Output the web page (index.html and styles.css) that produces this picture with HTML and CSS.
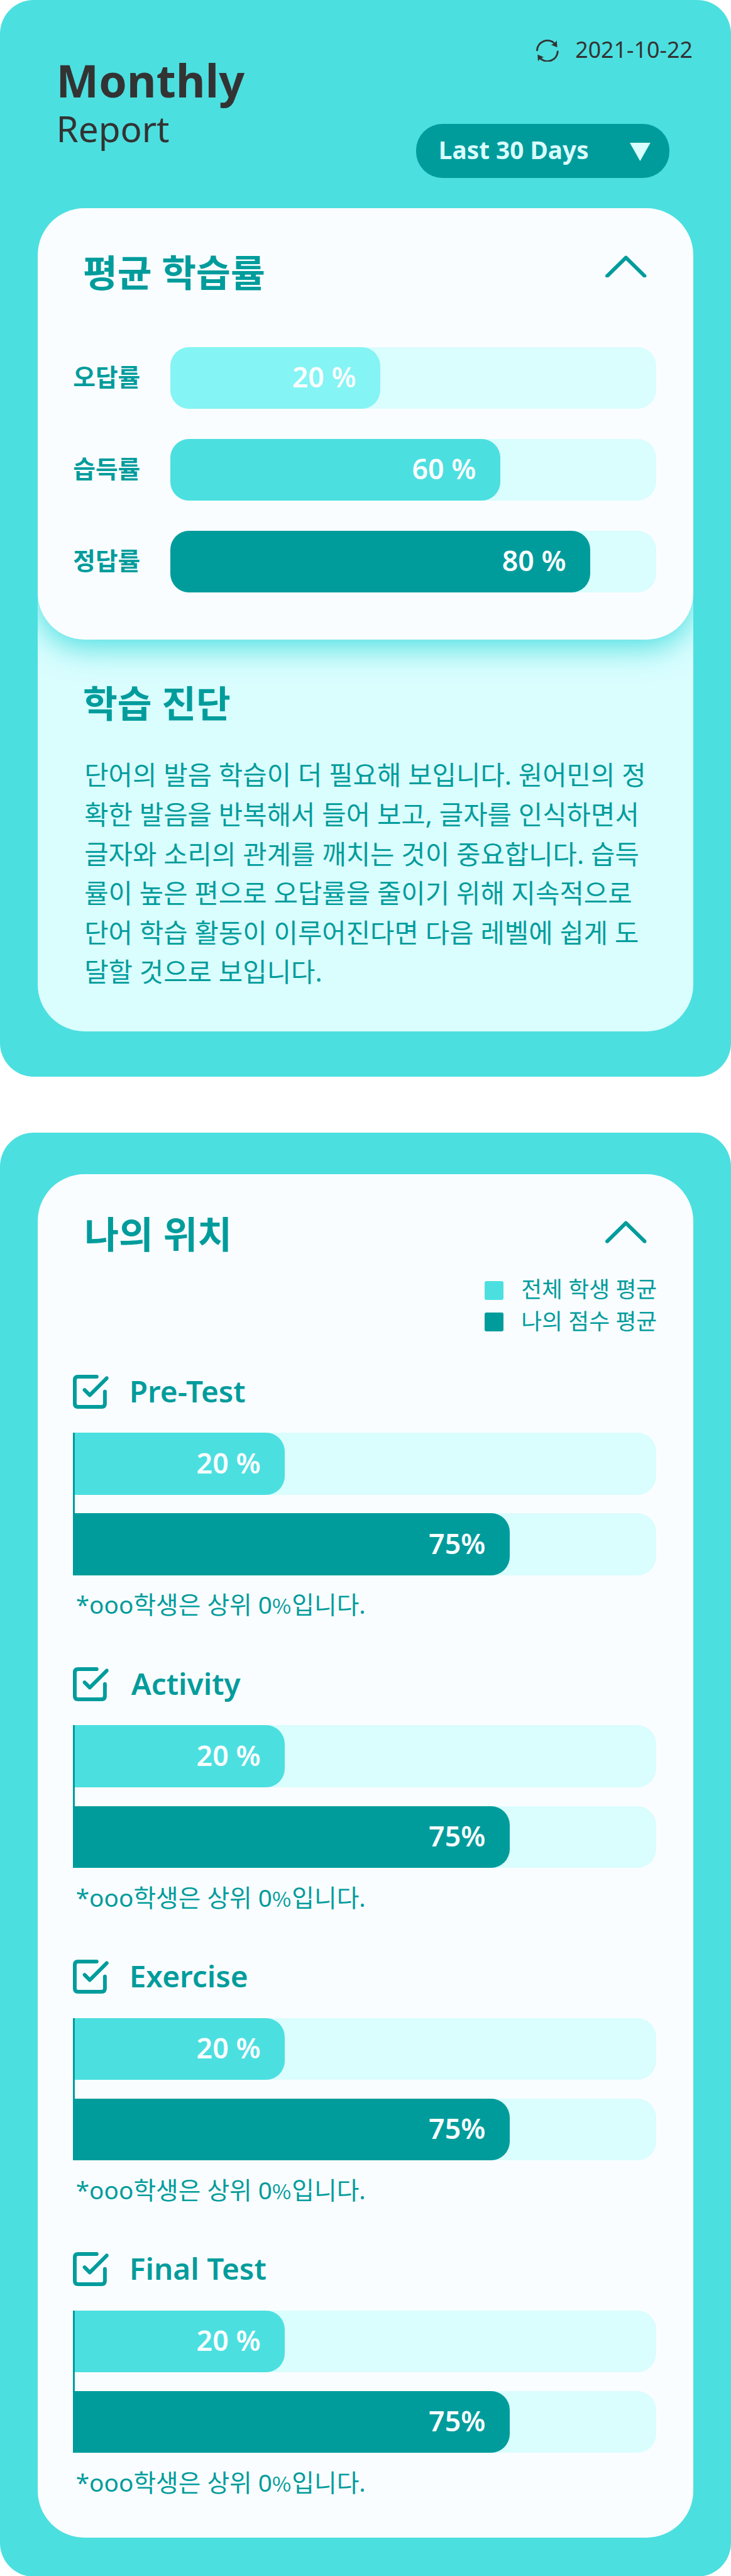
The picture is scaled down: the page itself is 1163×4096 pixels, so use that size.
FILE: index.html
```html
<!DOCTYPE html>
<html lang="ko">
<head>
<meta charset="utf-8">
<title>Monthly Report</title>
<link rel="stylesheet" href="styles.css">
</head>
<body>
<svg class="defs" width="0" height="0" aria-hidden="true">
  <symbol id="chevron" viewBox="0 0 88 48"><path d="M4 44L44 5L84 44" fill="none" stroke="currentColor" stroke-width="8" stroke-linecap="round" stroke-linejoin="round"/></symbol>
  <symbol id="check" viewBox="0 0 76 73"><path d="M50.7 4H11Q4 4 4 11V61.5Q4 68.5 11 68.5H61.3Q68.3 68.5 68.3 61.5V35.7M25 32.3L36 43.3L72.3 7.3" fill="none" stroke="currentColor" stroke-width="8" stroke-linecap="round" stroke-linejoin="round"/></symbol>
</svg>
<main class="page">
  <section class="sheet sheet-summary">
    <header class="top">
      <h1 class="heading"><span class="heading-main">Monthly</span><span class="heading-sub">Report</span></h1>
      <div class="tools">
        <div class="date">
          <svg class="refresh" viewBox="0 0 48 48"><path d="M2 22.5A22 22 0 0 1 39 8M46 25.5A22 22 0 0 1 9 40" fill="none" stroke="currentColor" stroke-width="4" stroke-linecap="round"/><path d="M44 2L45 16.5L31.7 11Q39 9 44 2ZM4 46L3 31.7L16.5 37.5Q9 39 4 46Z" fill="currentColor"/></svg>
          <time>2021-10-22</time>
        </div>
        <button class="range">Last 30 Days<svg class="caret" viewBox="0 0 44 39"><path d="M0 0H44L22 39Z" fill="currentColor"/></svg></button>
      </div>
    </header>
    <div class="under">
      <div class="panel panel-rate">
        <div class="panel-head"><h2>평균 학습률</h2><svg class="chevron"><use href="#chevron"/></svg></div>
        <div class="rates">
          <div class="rate"><span class="rate-label">오답률</span><div class="track"><div class="fill light" style="width:43.24%">20 %</div></div></div>
          <div class="rate"><span class="rate-label">습득률</span><div class="track"><div class="fill mid" style="width:67.95%">60 %</div></div></div>
          <div class="rate"><span class="rate-label">정답률</span><div class="track"><div class="fill dark" style="width:86.49%">80 %</div></div></div>
        </div>
      </div>
      <article class="diagnosis">
        <h2>학습 진단</h2>
        <p>단어의 발음 학습이 더 필요해 보입니다. 원어민의 정<br>확한 발음을 반복해서 들어 보고, 글자를 인식하면서<br>글자와 소리의 관계를 깨치는 것이 중요합니다. 습득<br>률이 높은 편으로 오답률을 줄이기 위해 지속적으로<br>단어 학습 활동이 이루어진다면 다음 레벨에 쉽게 도<br>달할 것으로 보입니다.</p>
      </article>
    </div>
  </section>
  <section class="sheet sheet-position">
    <div class="panel panel-position">
      <div class="panel-head"><h2>나의 위치</h2><svg class="chevron"><use href="#chevron"/></svg></div>
      <ul class="legend">
        <li><i class="swatch mid"></i><span>전체 학생 평균</span></li>
        <li><i class="swatch dark"></i><span>나의 점수 평균</span></li>
      </ul>
      <section class="test">
        <h3><svg class="check"><use href="#check"/></svg>Pre-Test</h3>
        <div class="chart"><div class="track"><div class="fill mid" style="width:36.13%">20 %</div></div><div class="track"><div class="fill dark" style="width:74.84%">75%</div></div></div>
        <p class="note">*ooo학생은 상위 0<span class="pct">%</span>입니다.</p>
      </section>
      <section class="test">
        <h3 class="wide"><svg class="check"><use href="#check"/></svg>Activity</h3>
        <div class="chart"><div class="track"><div class="fill mid" style="width:36.13%">20 %</div></div><div class="track"><div class="fill dark" style="width:74.84%">75%</div></div></div>
        <p class="note">*ooo학생은 상위 0<span class="pct">%</span>입니다.</p>
      </section>
      <section class="test">
        <h3><svg class="check"><use href="#check"/></svg>Exercise</h3>
        <div class="chart"><div class="track"><div class="fill mid" style="width:36.13%">20 %</div></div><div class="track"><div class="fill dark" style="width:74.84%">75%</div></div></div>
        <p class="note">*ooo학생은 상위 0<span class="pct">%</span>입니다.</p>
      </section>
      <section class="test">
        <h3><svg class="check"><use href="#check"/></svg>Final Test</h3>
        <div class="chart"><div class="track"><div class="fill mid" style="width:36.13%">20 %</div></div><div class="track"><div class="fill dark" style="width:74.84%">75%</div></div></div>
        <p class="note">*ooo학생은 상위 0<span class="pct">%</span>입니다.</p>
      </section>
    </div>
  </section>
</main>
</body>
</html>
```
FILE: styles.css
```css
:root {
  --u: 0.745513px;
  --teal: #4cdfe0;
  --deep: #009c9c;
  --pale: #dafdfe;
  --paper: #fafdff;
  --ink: #333;
}
* { box-sizing: border-box; margin: 0; padding: 0; }
body { background: #fff; font-family: "Noto Sans", "Noto Sans CJK KR", sans-serif; color: var(--deep); }
.defs { display: block; position: absolute; }
svg { display: block; flex: none; }
.page { display: flex; flex-direction: column; gap: calc(120 * var(--u)); width: calc(1560 * var(--u)); }
.sheet { background: var(--teal); border-radius: calc(72 * var(--u)); padding: 0 calc(80 * var(--u)); }
.sheet-summary { height: calc(2296 * var(--u)); }
.sheet-position { height: calc(3080 * var(--u)); padding-top: calc(88 * var(--u)); }

.top { height: calc(444 * var(--u)); display: flex; justify-content: space-between; color: var(--ink); }
.heading { display: flex; flex-direction: column; padding: calc(115 * var(--u)) 0 0 calc(40 * var(--u)); font-weight: 400; }
.heading-main { font-size: calc(96 * var(--u)); line-height: calc(112 * var(--u)); font-weight: 700; letter-spacing: calc(0.3 * var(--u)); }
.heading-sub { font-size: calc(76 * var(--u)); line-height: calc(95 * var(--u)); }
.tools { display: flex; flex-direction: column; align-items: flex-end; padding-top: calc(76 * var(--u)); gap: calc(124 * var(--u)); }
.date { display: flex; align-items: center; gap: calc(35 * var(--u)); height: calc(64 * var(--u)); padding-right: calc(2 * var(--u)); font-size: calc(48 * var(--u)); line-height: calc(64 * var(--u)); }
.date time { margin-top: calc(-5 * var(--u)); }
.refresh { width: calc(48 * var(--u)); height: calc(48 * var(--u)); }
.range { display: flex; align-items: center; justify-content: space-between; width: calc(540 * var(--u)); height: calc(116 * var(--u)); margin-right: calc(52 * var(--u)); padding: 0 calc(40 * var(--u)) calc(4 * var(--u)) calc(48 * var(--u)); border: 0; border-radius: calc(56 * var(--u)); background: var(--deep); color: var(--pale); font: 700 calc(52 * var(--u)) / 1.36 "Noto Sans", sans-serif; }
.caret { width: calc(44 * var(--u)); height: calc(39 * var(--u)); margin-top: calc(9 * var(--u)); }

.under { height: calc(1756 * var(--u)); border-radius: calc(100 * var(--u)); background: var(--pale); overflow: hidden; }
.panel { background: var(--paper); border-radius: calc(100 * var(--u)); }
.panel-rate { height: calc(920 * var(--u)); box-shadow: 0 calc(16 * var(--u)) calc(64 * var(--u)) var(--teal); }
.panel-head { display: flex; justify-content: space-between; height: calc(196 * var(--u)); padding: calc(78.5 * var(--u)) calc(100 * var(--u)) 0 calc(97 * var(--u)); }
.panel-position .panel-head { padding-top: calc(70 * var(--u)); padding-left: calc(100 * var(--u)); }
h2 { font-size: calc(80 * var(--u)); line-height: calc(116 * var(--u)); font-weight: 700; }
.chevron { width: calc(88 * var(--u)); height: calc(48 * var(--u)); margin-top: calc(21.5 * var(--u)); }
.panel-position .chevron { margin-top: calc(30 * var(--u)); }
.rates { display: flex; flex-direction: column; gap: calc(64 * var(--u)); padding: calc(100 * var(--u)) calc(80 * var(--u)) 0 calc(76 * var(--u)); }
.rate { display: flex; align-items: center; }
.rate-label { width: calc(208 * var(--u)); margin-top: calc(-5 * var(--u)); font-size: calc(52 * var(--u)); line-height: calc(76 * var(--u)); font-weight: 700; }
.track { flex: 1; height: calc(132 * var(--u)); background: var(--pale); border-radius: calc(40 * var(--u)); }
.fill { height: 100%; display: flex; align-items: center; justify-content: flex-end; padding: 0 calc(52 * var(--u)) calc(4 * var(--u)) 0; border-radius: inherit; color: var(--paper); font-size: calc(60 * var(--u)); line-height: 1.36; font-weight: 600; white-space: pre; }
.light { background: #84f4f4; }
.mid { background: var(--teal); }
.dark { background: var(--deep); }
.diagnosis { padding: calc(78.5 * var(--u)) 0 0 calc(97 * var(--u)); }
.diagnosis p { margin-top: calc(53 * var(--u)); padding-left: calc(3 * var(--u)); font-size: calc(56 * var(--u)); line-height: calc(84 * var(--u)); white-space: nowrap; }

.panel-position { height: calc(2908 * var(--u)); }
.legend { list-style: none; display: flex; flex-direction: column; align-items: flex-end; padding: calc(18 * var(--u)) calc(78 * var(--u)) 0 0; }
.legend li { display: flex; align-items: center; gap: calc(38.5 * var(--u)); height: calc(68 * var(--u)); font-size: calc(48 * var(--u)); line-height: calc(68 * var(--u)); }
.legend span { margin-top: calc(-5 * var(--u)); }
.swatch { width: calc(40 * var(--u)); height: calc(40 * var(--u)); border-radius: calc(4 * var(--u)); }
.test { height: calc(624 * var(--u)); padding: 0 calc(80 * var(--u)) 0 calc(76 * var(--u)); }
.legend + .test { margin-top: calc(78 * var(--u)); }
.test h3 { display: flex; align-items: flex-start; gap: calc(44 * var(--u)); height: calc(124 * var(--u)); font-size: calc(64 * var(--u)); line-height: calc(70 * var(--u)); font-weight: 600; }
.test h3.wide { gap: calc(48 * var(--u)); }
.check { width: calc(76 * var(--u)); height: calc(73 * var(--u)); }
.chart { display: flex; flex-direction: column; gap: calc(40 * var(--u)); border-left: 3px solid var(--deep); }
.chart .track { flex: none; border-radius: 0 calc(40 * var(--u)) calc(40 * var(--u)) 0; }
.note { margin-top: calc(25 * var(--u)); padding-left: calc(6 * var(--u)); font-size: calc(52 * var(--u)); line-height: calc(76 * var(--u)); }
.pct { margin-right: calc(1.5 * var(--u)); font-family: "Noto Sans CJK KR", sans-serif; font-size: calc(44 * var(--u)); line-height: 1; }
```
